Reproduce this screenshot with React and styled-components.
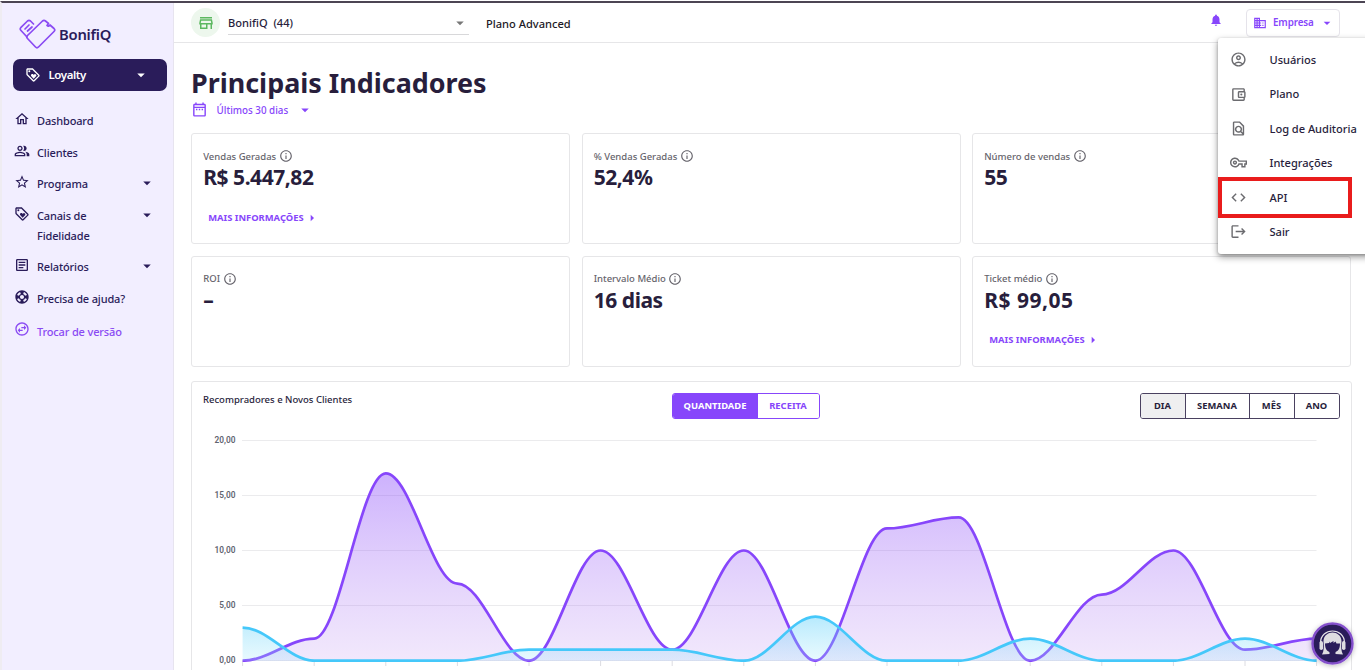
import React from 'react'
import styled, { createGlobalStyle } from 'styled-components'
import {
  MdOutlineLoyalty, MdOutlineHome, MdOutlinePeopleAlt, MdStarOutline, MdOutlineArticle, MdSupport,
  MdOutlineSwapHorizontalCircle, MdOutlineStore, MdOutlineDateRange, MdNotifications, MdBusiness,
  MdOutlineAccountCircle, MdOutlineAccountBalanceWallet, MdOutlineFindInPage, MdOutlineVpnKey, MdCode,
  MdLogout, MdOutlineInfo, MdArrowDropDown, MdArrowRight
} from 'react-icons/md'

const GlobalStyle = createGlobalStyle`
  * { box-sizing: border-box; }
  body {
    margin: 0;
    height: 670px;
    overflow: hidden;
    background: #fff;
    color: #281e3c;
    font-family: "Noto Sans", "Liberation Sans", sans-serif;
  }
  svg { display: block; flex: none; }
`

const Page = styled.div`
  height: 670px;
  border-top: 1px solid #fff;
  overflow: hidden;
`
const Shell = styled.div`
  display: flex;
  height: 669px;
  border-top: 2px solid #4c4553;
  border-left: 2px solid #efecf2;
`
const Sidebar = styled.aside`
  width: 172px;
  flex: none;
  padding-top: 1px;
  background: #f2eeff;
  border-right: 1px solid #e7e4ef;
`
const Brand = styled.div`
  display: flex;
  align-items: center;
  gap: 3px;
  height: 55px;
  padding: 5px 0 0 17px;
`
const BrandName = styled.span`
  font-size: 14.8px;
  font-weight: 600;
  letter-spacing: -0.25px;
  color: #2a1c5a;
`
const Product = styled.button`
  display: flex;
  align-items: center;
  width: 154px;
  height: 32px;
  margin: 0 0 0 11.4px;
  padding: 0 17px 1px 12px;
  border: 0;
  border-radius: 7px;
  background: #2a1c5a;
  color: #fff;
  font: 600 11.5px "Noto Sans", sans-serif;
  letter-spacing: -0.4px;
  span { flex: 1; text-align: left; padding-left: 7px; }
`
const Menu = styled.nav`
  padding: 14px 17px 0 12px;
`
const MenuItem = styled.div`
  display: flex;
  align-items: flex-start;
  min-height: ${p => (p.$tall ? '51.6px' : '31.6px')};
  padding-top: ${p => (p.$active ? '7px' : '6px')};
  font-size: 11px;
  font-weight: 500;
  line-height: 20px;
  letter-spacing: -0.15px;
  color: ${p => (p.$active ? '#8a4af3' : '#2a1c5a')};
  span { width: 103px; padding-left: 7px; white-space: nowrap; }
  > svg:first-child { margin-top: ${p => (p.$active ? '-1px' : '0')}; }
  > svg:last-child:not(:first-child) { margin: 0 0 0 auto; }
`
const Main = styled.main`
  flex: 1;
  min-width: 0;
`
const Topbar = styled.header`
  display: flex;
  align-items: center;
  height: 40px;
  padding: 0 25px 0 17px;
  border-bottom: 1px solid #e6e6e8;
`
const StoreBadge = styled.div`
  display: grid;
  place-items: center;
  width: 29px;
  height: 29px;
  border-radius: 50%;
  background: #edf7ed;
  color: #5cb860;
`
const StoreSelect = styled.div`
  display: flex;
  align-items: center;
  justify-content: space-between;
  width: 241px;
  height: 24px;
  margin-left: 8px;
  padding-top: 1px;
  border-bottom: 1px solid #d8d8da;
  font-size: 11.1px;
  font-weight: 500;
  svg { color: #777; }
`
const PlanName = styled.div`
  margin-left: 17px;
  padding-top: 2px;
  font-size: 11.1px;
  font-weight: 500;
  color: #1d1a26;
`
const Bell = styled.div`
  margin: -5px 23px 0 auto;
  color: #8746fb;
`
const CompanyButton = styled.button`
  display: flex;
  align-items: center;
  width: 94px;
  height: 28px;
  padding: 0 4px 0 6px;
  border: 1px solid #e5e3ea;
  border-radius: 4px;
  background: #fff;
  color: #8746fb;
  font: 600 9.8px "Noto Sans", sans-serif;
  letter-spacing: -0.1px;
  span { flex: 1; text-align: left; padding: 0 0 1px 6px; }
`
const Content = styled.div`
  padding: 22px 13px 0 17px;
`
const Title = styled.h1`
  margin: 0;
  font-size: 26.9px;
  line-height: 36px;
  font-weight: 700;
  white-space: nowrap;
`
const Period = styled.div`
  display: flex;
  align-items: center;
  height: 17px;
  margin-bottom: 15px;
  font-size: 9.8px;
  font-weight: 500;
  color: #8746fb;
  span { padding: 2px 8px 0 8.5px; }
`
const Cards = styled.section`
  display: grid;
  grid-template-columns: repeat(3, 379px);
  gap: 11.5px;
`
const Card = styled.article`
  height: 111px;
  padding: 14px 11.2px;
  border: 1px solid #e6e6e8;
  border-radius: 3px;
`
const CardLabel = styled.div`
  display: flex;
  align-items: center;
  gap: 2.5px;
  height: 16px;
  font-size: 9.5px;
  font-weight: 500;
  color: #66646c;
`
const CardValue = styled.div`
  height: 28px;
  font-size: 21px;
  font-weight: 700;
  line-height: 27px;
  letter-spacing: ${p => (p.$wide ? '0.5px' : '-0.45px')};
`
const MoreLink = styled.a`
  display: flex;
  align-items: center;
  height: 18px;
  margin-top: 16px;
  padding-left: 5px;
  font-size: 9.4px;
  font-weight: 700;
  color: #8746fb;
  svg { margin-top: 1px; }
`
const ChartCard = styled.section`
  width: 1161px;
  height: 320px;
  margin-top: 14px;
  border: 1px solid #e6e6e8;
  border-radius: 3px;
`
const ChartHeader = styled.div`
  display: flex;
  align-items: flex-start;
  height: 38px;
  padding: 11px 11px 0 11px;
`
const ChartTitle = styled.div`
  width: 469px;
  font-size: 9.5px;
  line-height: 14px;
  font-weight: 500;
`
const Toggle = styled.div`
  display: flex;
  height: 26px;
  margin-left: ${p => (p.$right ? 'auto' : '0')};
  border: 1px solid ${p => p.$color};
  border-radius: 3px;
  overflow: hidden;
`
const ToggleButton = styled.button`
  width: ${p => p.$width}px;
  padding: 0 1px 0 0;
  border: 0;
  border-left: ${p => (p.$divided ? '1px solid #4a4160' : '0')};
  background: ${p => p.$bg || '#fff'};
  color: ${p => p.$color || '#281e3c'};
  font: 700 9.4px "Noto Sans", sans-serif;
`
const CompanyMenu = styled.div`
  position: absolute;
  top: 38px;
  left: 1218px;
  width: 160px;
  height: 216px;
  padding-top: 4.5px;
  border-radius: 3px;
  background: #fff;
  box-shadow: 0 3px 7px rgba(0, 0, 0, 0.4), 0 1px 3px rgba(0, 0, 0, 0.2);
`
const CompanyItem = styled.div`
  display: flex;
  align-items: center;
  height: 34.4px;
  padding-left: 12px;
  font-size: 11.1px;
  font-weight: 500;
  letter-spacing: -0.03px;
  white-space: nowrap;
  svg { color: #6b6b6f; }
  span { padding: 0 0 0.5px 22.5px; }
`
const Highlight = styled.div`
  position: absolute;
  top: 177px;
  left: 1218px;
  width: 134px;
  height: 41px;
  border: 4px solid #e91c1c;
`
const ChatButton = styled.div`
  position: absolute;
  top: 622px;
  left: 1311px;
  width: 43px;
  height: 43px;
  border-radius: 50%;
  box-shadow: 0 1px 5px rgba(0, 0, 0, 0.25);
`

const menu = [
  { icon: MdOutlineHome, text: 'Dashboard' },
  { icon: MdOutlinePeopleAlt, text: 'Clientes' },
  { icon: MdStarOutline, text: 'Programa', open: true },
  { icon: MdOutlineLoyalty, text: <>Canais de<br />Fidelidade</>, open: true, tall: true },
  { icon: MdOutlineArticle, text: 'Relatórios', open: true },
  { icon: MdSupport, text: 'Precisa de ajuda?' },
  { icon: MdOutlineSwapHorizontalCircle, text: 'Trocar de versão', active: true }
]

const cards = [
  { label: 'Vendas Geradas', value: 'R$ 5.447,82', more: true },
  { label: '% Vendas Geradas', value: '52,4%' },
  { label: 'Número de vendas', value: '55' },
  { label: 'ROI', value: '–' },
  { label: 'Intervalo Médio', value: '16 dias' },
  { label: 'Ticket médio', value: 'R$ 99,05', more: true, wide: true }
]

const companyMenu = [
  { icon: MdOutlineAccountCircle, text: 'Usuários' },
  { icon: MdOutlineAccountBalanceWallet, text: 'Plano' },
  { icon: MdOutlineFindInPage, text: 'Log de Auditoria' },
  { icon: MdOutlineVpnKey, text: 'Integrações' },
  { icon: MdCode, text: 'API' },
  { icon: MdLogout, text: 'Sair' }
]

const recompradores = [0, 2, 17, 7, 0, 10, 1, 10, 0, 12, 13, 0, 6, 10, 1, 2]
const novos = [3, 0, 0, 0, 1, 1, 1, 0, 4, 0, 0, 2, 0, 0, 2, 0]

const px = i => 50.6 + i * 71.6
const py = v => 240.7 - v * 11.02

const curve = data => data.map((v, i) => {
  if (i === 0) return `M${px(0)} ${py(v)}`
  const d = 71.6 * 0.35
  return `C${px(i - 1) + d} ${py(data[i - 1])} ${px(i) - d} ${py(v)} ${px(i)} ${py(v)}`
}).join(' ')

const area = data => `${curve(data)} V240.7 H50.6 Z`

const Chart = () => {
  return (
    <svg width="1159" height="280" viewBox="0 0 1159 280">
      <defs>
        <linearGradient id="purple" gradientUnits="userSpaceOnUse" x1="0" y1="53" x2="0" y2="240">
          <stop offset="0" stopColor="#8746fb" stopOpacity="0.42" />
          <stop offset="1" stopColor="#b98af0" stopOpacity="0.2" />
        </linearGradient>
        <linearGradient id="blue" gradientUnits="userSpaceOnUse" x1="0" y1="196" x2="0" y2="240">
          <stop offset="0" stopColor="#45c8fa" stopOpacity="0.4" />
          <stop offset="1" stopColor="#9be6fb" stopOpacity="0.24" />
        </linearGradient>
        <clipPath id="plot"><rect x="50" y="0" width="1075" height="242" /></clipPath>
      </defs>
      {[20, 15, 10, 5, 0].map(v => (
        <g key={v}>
          <path d={`M50 ${Math.floor(py(v)) + 0.5}H1124.5`} stroke="#ebebed" />
          <text x="43.5" y={py(v) + 2.6} textAnchor="end" fontSize="8.3" fontWeight="600" fill="#5f6470" fontFamily="Roboto, sans-serif">{v},00</text>
        </g>
      ))}
      {novos.map((_, i) => <path key={i} d={`M${px(i)} 241v5`} stroke="#dcdce2" />)}
      <g clipPath="url(#plot)" fill="none" strokeWidth="2.7">
        <path d={area(recompradores)} fill="url(#purple)" />
        <path d={curve(recompradores)} stroke="#8746fb" />
        <path d={area(novos)} fill="url(#blue)" />
        <path d={curve(novos)} stroke="#45c8fa" />
      </g>
    </svg>
  )
}

const Logo = () => (
  <svg width="37" height="30" viewBox="0 0 37 30" fill="none" stroke="#8a4af3" strokeWidth="1.7" strokeLinecap="round" strokeLinejoin="round">
    <path d="M14.5 5 11.5 2Q10 .8 8.500 2L2 8.300Q.5 10 2 11.500L8 18" />
    <path d="M8.5 16.5 23.5 2Q25 .8 26.5 2L29.5 4.5L28 6.5Q29.5 8 31 6L35 9.5Q36.5 11 35 12.5L19.5 28Q18 29.500 16.5 28L8.5 19.5Q7 18 8.5 16.5Z" />
    <path d="M6 10 10 6M8.5 12 13 8" />
  </svg>
)

const Agent = () => (
  <svg width="43" height="43" viewBox="0 0 43 43">
    <circle cx="21.5" cy="21.5" r="20" fill="#2a1c5a" stroke="#8450cb" strokeWidth="2.5" />
    <path d="M9.5 21C9.5 5 33.5 5 33.5 21" fill="none" stroke="#e6e4e8" strokeWidth="1.2" />
    <path d="M11 32.5Q13.500 29 12.5 19C13 7.5 30 7.5 30.5 19Q29.500 29 32 32.5L24.5 32V30H18.5V32Z" fill="#dedce1" />
    <path d="M14 21.5L18 21 19 19.5V21L22.500 19V21L24.500 19.500 25.500 21.500H29C29 28 26 30.500 21.500 30.500S14 28 14 21.5Z" fill="#2a1c5a" />
    <rect x="8.5" y="19" width="3.5" height="9" rx="1.7" fill="#dedce1" />
    <rect x="31" y="19" width="3.5" height="9" rx="1.7" fill="#dedce1" />
  </svg>
)

const App = () => {
  return (
    <Page>
      <GlobalStyle />
      <Shell>
        <Sidebar>
          <Brand><Logo /><BrandName>BonifiQ</BrandName></Brand>
          <Product><MdOutlineLoyalty size={16} /><span>Loyalty</span><MdArrowDropDown size={18} /></Product>
          <Menu>
            {menu.map((item, i) => (
              <MenuItem key={i} $active={item.active} $tall={item.tall}>
                <item.icon size={16} />
                <span>{item.text}</span>
                {item.open && <MdArrowDropDown size={18} />}
              </MenuItem>
            ))}
          </Menu>
        </Sidebar>
        <Main>
          <Topbar>
            <StoreBadge><MdOutlineStore size={18} /></StoreBadge>
            <StoreSelect>BonifiQ&nbsp; (44)<MdArrowDropDown size={18} /></StoreSelect>
            <PlanName>Plano Advanced</PlanName>
            <Bell><MdNotifications size={14} /></Bell>
            <CompanyButton><MdBusiness size={14} /><span>Empresa</span><MdArrowDropDown size={16} /></CompanyButton>
          </Topbar>
          <Content>
            <Title>Principais Indicadores</Title>
            <Period><MdOutlineDateRange size={17} /><span>Últimos 30 dias</span><MdArrowDropDown size={18} /></Period>
            <Cards>
              {cards.map(card => (
                <Card key={card.label}>
                  <CardLabel>{card.label}<MdOutlineInfo size={14} /></CardLabel>
                  <CardValue $wide={card.wide}>{card.value}</CardValue>
                  {card.more && <MoreLink>MAIS INFORMAÇÕES<MdArrowRight size={16} /></MoreLink>}
                </Card>
              ))}
            </Cards>
            <ChartCard>
              <ChartHeader>
                <ChartTitle>Recompradores e Novos Clientes</ChartTitle>
                <Toggle $color="#8746fb">
                  <ToggleButton $width={85} $bg="#8746fb" $color="#fff">QUANTIDADE</ToggleButton>
                  <ToggleButton $width={61} $color="#8746fb">RECEITA</ToggleButton>
                </Toggle>
                <Toggle $right $color="#4a4160">
                  <ToggleButton $width={44} $bg="#efeff0">DIA</ToggleButton>
                  <ToggleButton $width={64} $divided>SEMANA</ToggleButton>
                  <ToggleButton $width={45} $divided>MÊS</ToggleButton>
                  <ToggleButton $width={45} $divided>ANO</ToggleButton>
                </Toggle>
              </ChartHeader>
              <Chart />
            </ChartCard>
          </Content>
        </Main>
      </Shell>
      <CompanyMenu>
        {companyMenu.map(item => (
          <CompanyItem key={item.text}><item.icon size={17} /><span>{item.text}</span></CompanyItem>
        ))}
      </CompanyMenu>
      <Highlight />
      <ChatButton><Agent /></ChatButton>
    </Page>
  )
}

export default App
